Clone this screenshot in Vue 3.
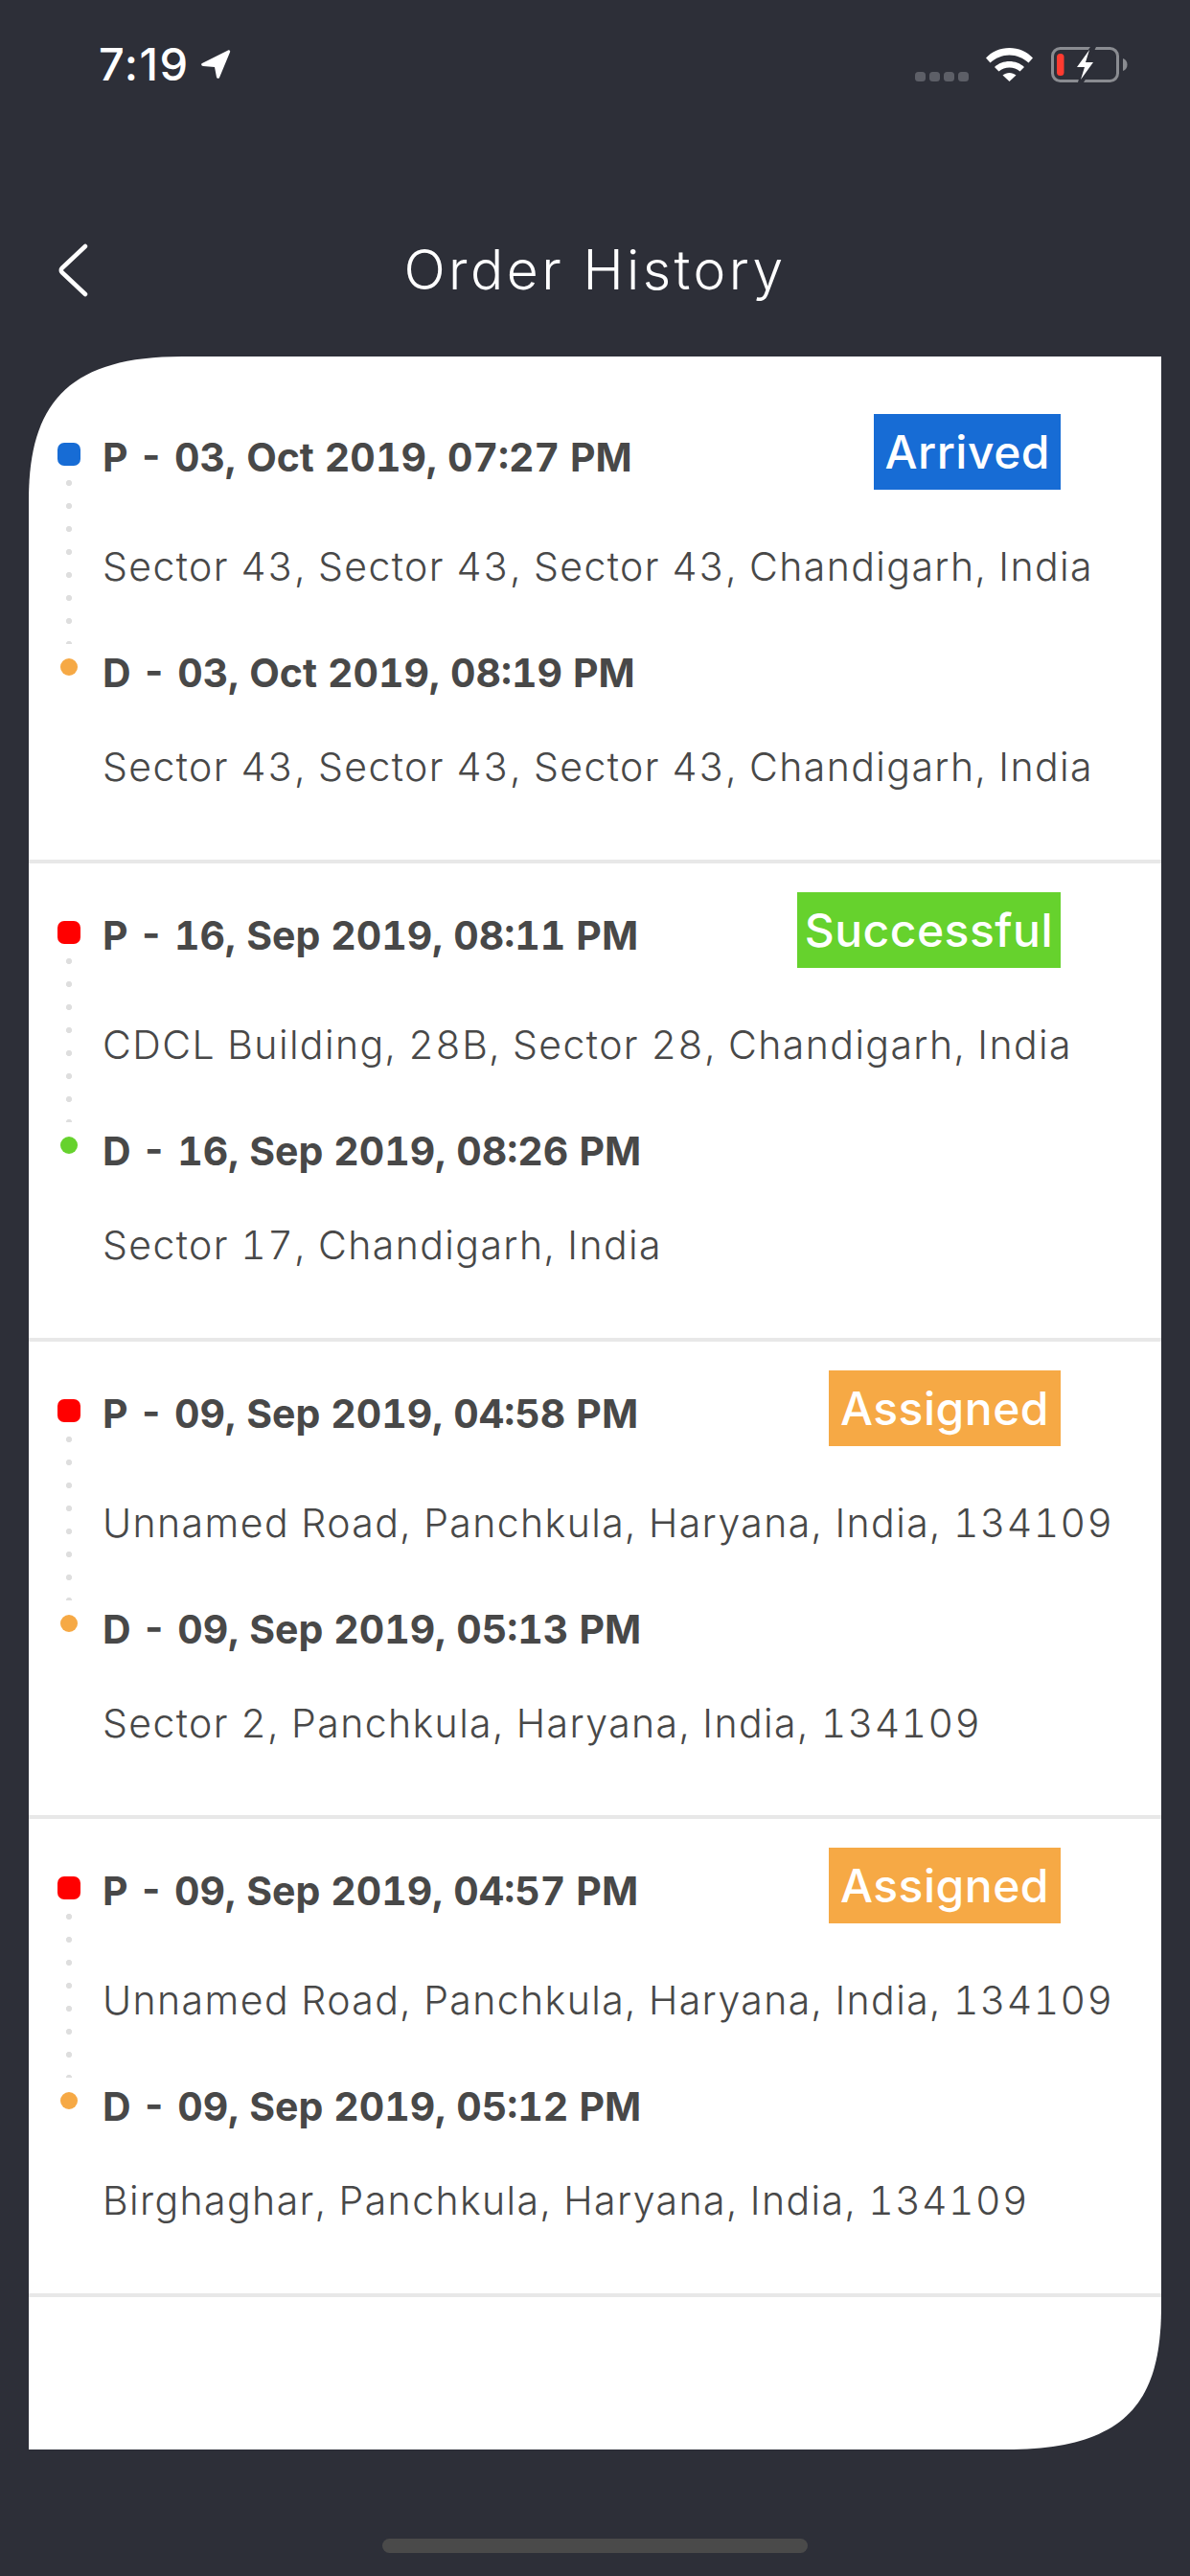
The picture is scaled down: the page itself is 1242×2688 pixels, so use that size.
<script setup>
const orders = [
  { pDot: 'blue', dDot: 'orange', status: 'Arrived', statusClass: 'blue',
    p: 'P - 03, Oct 2019, 07:27 PM', pa: 'Sector 43, Sector 43, Sector 43, Chandigarh, India',
    d: 'D - 03, Oct 2019, 08:19 PM', da: 'Sector 43, Sector 43, Sector 43, Chandigarh, India' },
  { pDot: 'red', dDot: 'green', status: 'Successful', statusClass: 'green',
    p: 'P - 16, Sep 2019, 08:11 PM', pa: 'CDCL Building, 28B, Sector 28, Chandigarh, India',
    d: 'D - 16, Sep 2019, 08:26 PM', da: 'Sector 17, Chandigarh, India' },
  { pDot: 'red', dDot: 'orange', status: 'Assigned', statusClass: 'orange',
    p: 'P - 09, Sep 2019, 04:58 PM', pa: 'Unnamed Road, Panchkula, Haryana, India, 134109',
    d: 'D - 09, Sep 2019, 05:13 PM', da: 'Sector 2, Panchkula, Haryana, India, 134109' },
  { pDot: 'red', dDot: 'orange', status: 'Assigned', statusClass: 'orange',
    p: 'P - 09, Sep 2019, 04:57 PM', pa: 'Unnamed Road, Panchkula, Haryana, India, 134109',
    d: 'D - 09, Sep 2019, 05:12 PM', da: 'Birghaghar, Panchkula, Haryana, India, 134109' }
]
</script>

<template>
  <div class="screen">
    <div class="status">
      <div class="time">
        <span>7:19</span>
        <svg width="32" height="32" viewBox="0 0 32 32"><path d="M2 15 29 1.500c1.500-.6 2.700.6 2 2L20 30c-.7 1.400-2.700 1-3-.5L15 19 3 18c-1.800-.2-2.500-2.200-1-3z" fill="#fff"/></svg>
      </div>
      <div class="indicators">
        <div class="signal"><i></i><i></i><i></i><i></i></div>
        <svg width="50" height="37" viewBox="0 0 50 37">
          <path d="M0 11.500C6 5 15 1 24.500 1S43 5 49 11.500L44.500 16.500C39 11.500 32 8.500 24.500 8.500S10 11.500 4.500 16.500z" fill="#fff"/>
          <path d="M9 21C13 17 19 15 24.500 15S36 17 40 21L35.500 25.500C32.500 23 28.500 21.500 24.500 21.500S16.500 23 13.500 25.500z" fill="#fff"/>
          <path d="M17.500 29.500C19.500 28 22 27 24.500 27S29.500 28 31.500 29.500L24.500 36z" fill="#fff"/>
        </svg>
        <svg class="battery" width="80" height="37" viewBox="0 0 80 37">
          <rect x="1.500" y="1.500" width="68" height="34" rx="8" fill="none" stroke="#8a8c91" stroke-width="3"/>
          <path d="M75 12c3 1 4.500 3.500 4.500 6.500S78 24 75 25z" fill="#8a8c91"/>
          <rect x="6" y="7" width="7.500" height="23" rx="3.500" fill="#ff3b30"/>
          <path d="M41 0 24 23h8l-4 14h6l14-23h-8l7-14z" fill="#2d2f38"/>
          <path d="M40 3 27 21h8l-4 13 13-18h-8z" fill="#fff"/>
        </svg>
      </div>
    </div>

    <header class="nav">
      <svg class="back" width="36" height="60" viewBox="0 0 36 60"><path d="M31 5 6.500 28c-1 1-1 3 0 4L31 55" fill="none" stroke="#fff" stroke-width="4.500" stroke-linecap="round" stroke-linejoin="round"/></svg>
      <h1>Order History</h1>
    </header>

    <main class="card">
      <section v-for="(o, i) in orders" :key="i" class="order">
        <div class="rail">
          <span class="pin" :class="o.pDot"></span>
          <span class="dots"></span>
          <span class="drop" :class="o.dDot"></span>
        </div>
        <div class="info">
          <div class="head">
            <h2>{{ o.p }}</h2>
            <span class="badge" :class="o.statusClass">{{ o.status }}</span>
          </div>
          <p class="addr">{{ o.pa }}</p>
          <h2 class="dtime">{{ o.d }}</h2>
          <p class="addr last">{{ o.da }}</p>
        </div>
      </section>
    </main>

    <div class="home-wrap"><div class="home"></div></div>
  </div>
</template>

<style>
html, body { margin: 0; background: #2d2f38; }
</style>

<style scoped>
.screen {
  width: 1242px;
  height: 2688px;
  background: #2d2f38;
  font-family: Inter, "Liberation Sans", sans-serif;
  display: flex;
  flex-direction: column;
  overflow: hidden;
}
.status {
  height: 134px;
  box-sizing: border-box;
  padding: 44px 65px 0 103px;
  display: flex;
  justify-content: space-between;
  align-items: flex-start;
}
.time {
  display: flex;
  align-items: center;
  gap: 11px;
  color: #fff;
  font-size: 47px;
  font-weight: 500;
  line-height: 46px;
  letter-spacing: 1.500px;
}
.indicators { display: flex; align-items: flex-start; gap: 18px; margin-top: 5px; }
.signal { display: flex; gap: 4px; margin-top: 26px; }
.signal i { width: 11px; height: 10px; border-radius: 3.500px; background: #5d5f67; display: block; }
.nav {
  height: 238px;
  box-sizing: border-box;
  position: relative;
  display: flex;
  justify-content: center;
}
.back { position: absolute; left: 58px; top: 118px; }
.nav h1 {
  margin: 0;
  padding-top: 108px;
  color: #fff;
  font-size: 57px;
  line-height: 80px;
  font-weight: 300;
  letter-spacing: 3.400px;
}
.card {
  width: 1182px;
  height: 2184px;
  margin-left: 30px;
  background: #fff;
  clip-path: path('M0 150 C0 50 40 0 160 0 L1182 0 L1182 2034 C1182 2130 1150 2184 1020 2184 L0 2184 Z');
  box-sizing: border-box;
  padding-top: 30px;
}
.order {
  height: 498.750px;
  box-sizing: border-box;
  border-bottom: 4px solid #e8e8e8;
  display: flex;
  padding-left: 30px;
  color: #484848;
}
.rail { width: 24px; flex: none; display: flex; flex-direction: column; align-items: center; padding-top: 60px; }
.pin { width: 24px; height: 24px; border-radius: 7px; flex: none; }
.dots {
  width: 6px;
  height: 171px;
  margin-top: 15px;
  flex: none;
  background: radial-gradient(circle at 3px 3px, #dedede 2.800px, transparent 3.300px) 0 0 / 6px 24px repeat-y;
}
.drop { width: 18px; height: 18px; border-radius: 50%; margin-top: 15px; flex: none; }
.blue { background: #176cd5; }
.red { background: #ff0000; }
.orange { background: #f6a945; }
.green { background: #66d22d; }
.info { flex: 1; padding-left: 23px; min-width: 0; }
.head { display: flex; justify-content: space-between; align-items: flex-start; padding-right: 105px; height: 109px; }
h2 {
  margin: 0;
  font-size: 41px;
  line-height: 50px;
  font-weight: 700;
  letter-spacing: 0;
  font-variant-numeric: tabular-nums;
  white-space: nowrap;
}
.head h2 { margin-top: 50px; }
.badge {
  margin-top: 30px;
  color: #fff;
  font-size: 48px;
  line-height: 79px;
  font-weight: 500;
  letter-spacing: 0.500px;
}
.badge.blue { padding: 0 11px; }
.badge.green { padding: 0 8px; }
.badge.orange { padding: 0 12px; }
.addr {
  margin: 55px 0 0;
  font-size: 41px;
  line-height: 50px;
  font-weight: 300;
  letter-spacing: 1.400px;
  font-variant-numeric: tabular-nums;
  white-space: nowrap;
}
.dtime { margin-top: 61px; }
.addr.last { margin-top: 48px; }
.home-wrap { flex: 1; display: flex; justify-content: center; align-items: flex-start; padding-top: 93px; }
.home { width: 444px; height: 15px; border-radius: 8px; background: #4a4a4a; }
</style>
